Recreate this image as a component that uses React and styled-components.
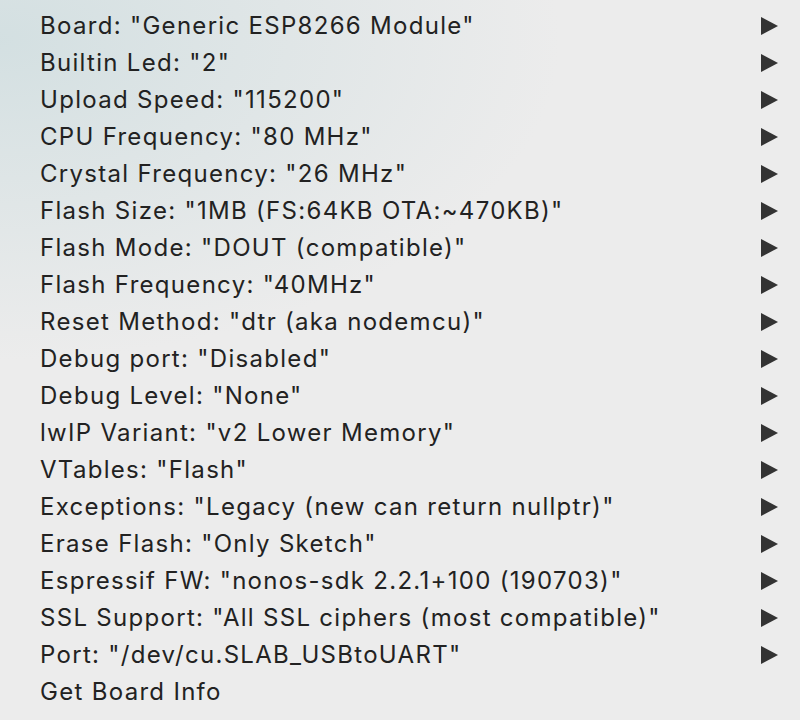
import styled, { createGlobalStyle } from 'styled-components'

const GlobalStyle = createGlobalStyle`
    html, body {
        margin: 0;
        padding: 0;
        background: #ececec;
    }
`

const Menu = styled.div`
    width: 800px;
    height: 720px;
    box-sizing: border-box;
    padding: 7px 0 0 0;
    display: flex;
    flex-direction: column;
    background:
        radial-gradient(ellipse 560px 320px at 0 40px, rgba(210, 223, 225, 0.95), rgba(236, 236, 236, 0) 100%),
        #ececec;
    font-family: Inter, "Liberation Sans", Arial, sans-serif;
    color: #222;
`

const Row = styled.div`
    height: 37px;
    display: flex;
    align-items: center;
    justify-content: space-between;
    padding: 0 22px 0 40px;
    font-size: 24px;
    letter-spacing: 1.3px;
    white-space: nowrap;
`

const Arrow = styled.span`
    width: 0;
    height: 0;
    border-top: 9px solid transparent;
    border-bottom: 9px solid transparent;
    border-left: 17px solid #333;
`

const items = [
    'Board: "Generic ESP8266 Module"',
    'Builtin Led: "2"',
    'Upload Speed: "115200"',
    'CPU Frequency: "80 MHz"',
    'Crystal Frequency: "26 MHz"',
    'Flash Size: "1MB (FS:64KB OTA:~470KB)"',
    'Flash Mode: "DOUT (compatible)"',
    'Flash Frequency: "40MHz"',
    'Reset Method: "dtr (aka nodemcu)"',
    'Debug port: "Disabled"',
    'Debug Level: "None"',
    'lwIP Variant: "v2 Lower Memory"',
    'VTables: "Flash"',
    'Exceptions: "Legacy (new can return nullptr)"',
    'Erase Flash: "Only Sketch"',
    'Espressif FW: "nonos-sdk 2.2.1+100 (190703)"',
    'SSL Support: "All SSL ciphers (most compatible)"',
    'Port: "/dev/cu.SLAB_USBtoUART"',
]

export default function App() {
    return (
        <>
            <GlobalStyle />
            <Menu>
                {items.map((label) => (
                    <Row key={label}>
                        <span>{label}</span>
                        <Arrow />
                    </Row>
                ))}
                <Row>
                    <span>Get Board Info</span>
                </Row>
            </Menu>
        </>
    )
}
